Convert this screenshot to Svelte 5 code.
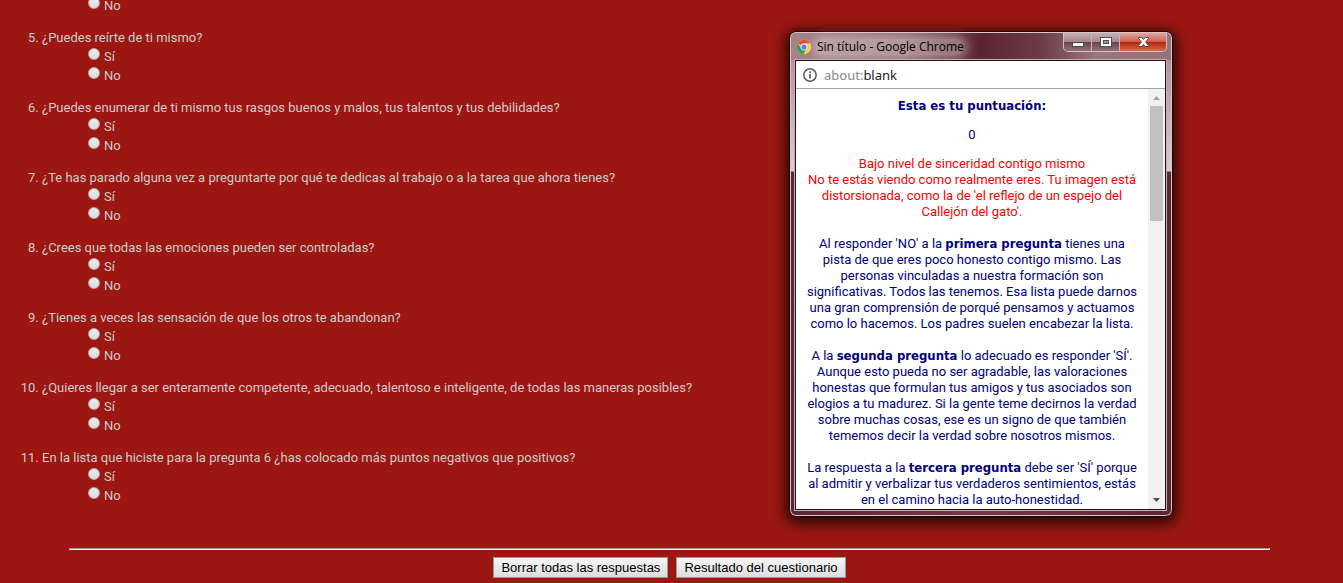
<script lang="ts">
  const questions: { number: number; text: string }[] = [
    { number: 5, text: '¿Puedes reírte de ti mismo?' },
    { number: 6, text: '¿Puedes enumerar de ti mismo tus rasgos buenos y malos, tus talentos y tus debilidades?' },
    { number: 7, text: '¿Te has parado alguna vez a preguntarte por qué te dedicas al trabajo o a la tarea que ahora tienes?' },
    { number: 8, text: '¿Crees que todas las emociones pueden ser controladas?' },
    { number: 9, text: '¿Tienes a veces las sensación de que los otros te abandonan?' },
    { number: 10, text: '¿Quieres llegar a ser enteramente competente, adecuado, talentoso e inteligente, de todas las maneras posibles?' },
    { number: 11, text: 'En la lista que hiciste para la pregunta 6 ¿has colocado más puntos negativos que positivos?' }
  ];
</script>

{#snippet option(number: number, label: string)}
  <label class="option">
    <input type="radio" name="q{number}" value={label} />
    <span>{label}</span>
  </label>
{/snippet}

<form class="quiz">
  <div class="previous">
    {@render option(4, 'No')}
  </div>

  <ol start="5">
    {#each questions as question (question.number)}
      <li>
        <span class="question">{question.text}</span>
        <div class="options">
          {@render option(question.number, 'Sí')}
          {@render option(question.number, 'No')}
        </div>
      </li>
    {/each}
  </ol>

  <hr />

  <div class="actions">
    <button type="reset">Borrar todas las respuestas</button>
    <button type="button">Resultado del cuestionario</button>
  </div>
</form>

<div class="window" role="dialog" aria-labelledby="window-title">
  <header class="titlebar">
    <svg class="logo" viewBox="0 0 14 14" aria-hidden="true">
      <circle cx="7" cy="7" r="7" fill="#fc4" />
      <path d="M7 7 1 3.4A7 7 0 0 1 13 3.5H7z" fill="#e14a3c" />
      <path d="M1 3.4A7 7 0 0 0 6.5 14L9.9 8.8 7 7 4.1 8.7z" fill="#2aa15c" />
      <path d="M7 3.5h6A7 7 0 0 1 6.5 14l3.6-5.3z" fill="#fc4" />
      <circle cx="7" cy="7" r="3.4" fill="#f4f4f4" />
      <circle cx="7" cy="7" r="2.6" fill="#4a86e8" />
    </svg>
    <span class="title" id="window-title">Sin título - Google Chrome</span>
    <div class="controls">
      <button type="button" class="control" aria-label="Minimizar">
        <svg width="13" height="13" viewBox="0 0 13 13"><rect x="1.5" y="6.5" width="11" height="4" fill="#fff" stroke="#4b4351" /></svg>
      </button>
      <button type="button" class="control" aria-label="Maximizar">
        <svg width="13" height="13" viewBox="0 0 13 13">
          <rect x="1.5" y="1.5" width="11" height="9" fill="#fff" stroke="#4b4d63" />
          <rect x="4.5" y="4.5" width="5" height="3" fill="#a58d94" stroke="#4b4d63" />
        </svg>
      </button>
      <button type="button" class="control close" aria-label="Cerrar">
        <svg width="13" height="13" viewBox="0 0 13 13">
          <path d="M1.5 1.5h3.2l1.8 2 1.8-2h3.2v1L8.6 6l2.9 3.5v1H8.3l-1.8-2-1.8 2H1.5v-1L4.4 6 1.5 2.5z" fill="#fff" stroke="#5b4650" />
        </svg>
      </button>
    </div>
  </header>

  <div class="client">
    <div class="address">
      <svg width="14" height="14" viewBox="0 0 14 14" aria-hidden="true">
        <circle cx="7" cy="7" r="6.2" fill="none" stroke="#5a5a5a" stroke-width="1.5" />
        <path d="M7 6v4.5M7 3.3V5" stroke="#5a5a5a" stroke-width="1.7" />
      </svg>
      <span><span class="scheme">about:</span>blank</span>
    </div>

    <div class="viewport">
      <div class="result">
        <p><b>Esta es tu puntuación:</b></p>
        <p>0</p>
        <p class="level">
          Bajo nivel de sinceridad contigo mismo<br />
          No te estás viendo como realmente eres. Tu imagen está distorsionada, como la de 'el reflejo de un espejo del Callejón del gato'.
        </p>
        <p class="note">
          Al responder 'NO' a la <b>primera pregunta</b> tienes una<br />
          pista de que eres poco honesto contigo mismo. Las<br />
          personas vinculadas a nuestra formación son<br />
          significativas. Todos las tenemos. Esa lista puede darnos<br />
          una gran comprensión de porqué pensamos y actuamos<br />
          como lo hacemos. Los padres suelen encabezar la lista.
        </p>
        <p class="note">
          A la <b>segunda pregunta</b> lo adecuado es responder 'SÍ'. Aunque esto pueda no ser agradable, las valoraciones honestas que formulan tus amigos y tus asociados son elogios a tu madurez. Si la gente teme decirnos la verdad sobre muchas cosas, ese es un signo de que también tememos decir la verdad sobre nosotros mismos.
        </p>
        <p class="note">
          La respuesta a la <b>tercera pregunta</b> debe ser 'SÍ' porque al admitir y verbalizar tus verdaderos sentimientos, estás en el camino hacia la auto-honestidad.
        </p>
      </div>
      <div class="scrollbar" aria-hidden="true">
        <svg width="17" height="17" viewBox="0 0 17 17"><path d="M5 11h7L8.5 7z" fill="#a3a3a3" /></svg>
        <div class="thumb"></div>
        <svg width="17" height="17" viewBox="0 0 17 17"><path d="M5 6h7L8.5 10z" fill="#505050" /></svg>
      </div>
    </div>
  </div>
</div>

<style>
  :global(body) {
    margin: 0;
    background: #9c1712;
    overflow: hidden;
  }

  .quiz {
    padding: 0 6px 5px 2px;
    color: #ccc;
    font: 13px/16px Tahoma, Roboto, sans-serif;
  }

  .previous {
    margin-top: -5px;
    padding-left: 80px;
  }

  ol {
    margin: 16px 0 44px;
    padding-left: 40px;
  }

  li {
    margin-bottom: 16px;
  }

  .question {
    display: block;
  }

  .options {
    padding-left: 40px;
  }

  .option {
    display: flex;
    gap: 4px;
    height: 19px;
    padding-left: 6px;
  }

  .option input {
    appearance: none;
    width: 12px;
    height: 12px;
    margin: 2px 0 0;
    border: 1px solid #b9a3a2;
    border-radius: 50%;
    background: linear-gradient(#ececec, #dcdcdc);
  }

  .option input:checked {
    background: radial-gradient(#444 30%, #e0e0e0 35%);
  }

  .option span {
    padding-top: 3px;
  }

  hr {
    box-sizing: border-box;
    width: 90%;
    margin: 0 auto 7px;
    border: 1px solid;
    border-color: #9a9a9a #eee #eee #9a9a9a;
  }

  .actions {
    display: flex;
    justify-content: center;
    gap: 8px;
  }

  .actions button {
    padding: 0 7px;
    border: 1px solid #999;
    border-radius: 0;
    background: linear-gradient(#f6f6f6, #ddd);
    color: #000;
    font: 13px/19px Arial, 'Liberation Sans', sans-serif;
  }

  .window {
    position: absolute;
    top: 31px;
    left: 789px;
    display: flex;
    flex-direction: column;
    box-sizing: border-box;
    width: 384px;
    height: 486px;
    padding: 1px 6px 6px 5px;
    border: 1px solid #1c0507;
    border-radius: 7px;
    background:
      linear-gradient(#a5848a, #dccdd0 139px, transparent 140px),
      linear-gradient(90deg, #5c2631, #713b45 50%, #5c2631);
    box-shadow:
      inset 0 0 0 1px #d8c6c9,
      0 3px 14px 3px rgba(0, 0, 0, 0.8);
  }

  .titlebar {
    display: flex;
    align-items: center;
    gap: 5px;
    height: 27px;
    margin: 0 -5px 0 -4px;
    padding-left: 6px;
    border-radius: 5px 5px 0 0;
    background: linear-gradient(90deg, #a68389, #8f6a72 30%, #5b2430 50%, #6d3b46 66%, #9a757d 80%, #96727a);
  }

  .logo {
    width: 14px;
    height: 14px;
  }

  .title {
    padding-left: 1px;
    border-radius: 8px;
    background: rgba(255, 255, 255, 0.3);
    box-shadow: 0 0 8px 4px rgba(255, 255, 255, 0.3);
    color: #000;
    font: 12px/16px 'Segoe UI', 'Open Sans', sans-serif;
  }

  .controls {
    display: flex;
    align-self: flex-start;
    margin: 0 4px 0 auto;
    border: 1px solid #d3c0c4;
    border-top: 0;
    border-radius: 0 0 5px 5px;
    overflow: hidden;
  }

  .control {
    display: flex;
    align-items: center;
    justify-content: center;
    width: 28px;
    height: 18px;
    padding: 0;
    border: 0;
    border-right: 1px solid #c9b3b8;
    background: linear-gradient(#c7b1b5, #a3868c 48%, #6e434e 50%, #927079);
  }

  .close {
    width: 46px;
    border-right: 0;
    background: linear-gradient(#dea498, #cd6351 48%, #b02210 50%, #da6c45);
  }

  .client {
    display: flex;
    flex: 1;
    flex-direction: column;
    min-height: 0;
    border: 1px solid #241115;
    background: #fff;
    box-shadow: 0 0 0 1px #c5aeb2;
  }

  .address {
    display: flex;
    align-items: center;
    gap: 7px;
    height: 27px;
    padding-left: 7px;
    border-bottom: 1px solid #a3a3a3;
    color: #222;
    font: 13px/18px 'Segoe UI', 'Noto Sans', sans-serif;
  }

  .scheme {
    color: #888;
  }

  .viewport {
    display: flex;
    flex: 1;
    min-height: 0;
    overflow: hidden;
  }

  .result {
    flex: 1;
    padding: 9px 8px 8px;
    color: #000080;
    font: 13px/16px Tahoma, Roboto, sans-serif;
    text-align: center;
  }

  .result p {
    margin: 0 0 13px;
  }

  .result b {
    font-family: Tahoma, 'DejaVu Sans Condensed', sans-serif;
  }

  .result .level,
  .result .note {
    margin-bottom: 16px;
  }

  .level {
    color: #f00;
  }

  .scrollbar {
    display: flex;
    flex-direction: column;
    width: 17px;
    background: #f1f1f1;
  }

  .thumb {
    height: 115px;
    margin: 0 2px auto;
    background: #c1c1c1;
  }
</style>
